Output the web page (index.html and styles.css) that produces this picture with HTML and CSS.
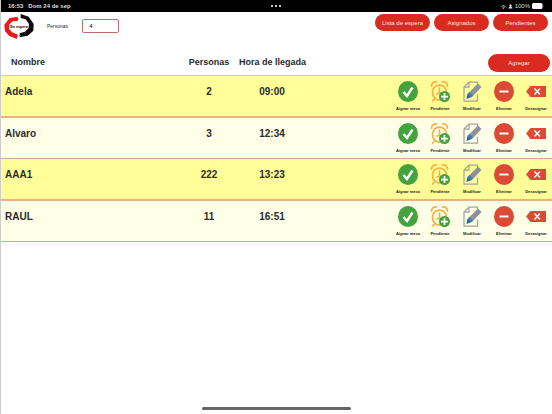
FILE: index.html
```html
<!DOCTYPE html>
<html lang="es">
<head>
    <meta charset="UTF-8">
    <meta name="viewport" content="width=device-width, initial-scale=1">
    <title>Lista de espera</title>
    <link rel="stylesheet" href="styles.css">
</head>
<body>
    <!-- iconos -->
    <svg class="sprite" aria-hidden="true">
        <symbol id="i-asignar" viewBox="0 0 40 42">
            <ellipse cx="20" cy="21" rx="20" ry="21" fill="#43a33c"/>
            <path d="M11 22l7 8 11-17" fill="none" stroke="#fff" stroke-width="5"/>
        </symbol>
        <symbol id="i-pendiente" viewBox="0 0 40 42">
            <g fill="none" stroke="#f2b445" stroke-width="3.5" stroke-linecap="round">
                <ellipse cx="19" cy="23" rx="14" ry="15"/>
                <path d="M3 10c0-6 5-9 10-8M25 2c6-1 10 3 10 8M19 14v10l-5 2M9 36l-4 4"/>
            </g>
            <circle cx="29" cy="31" r="11" fill="#43a33c"/>
            <path d="M29 24v14M22 31h14" stroke="#fff" stroke-width="3.5"/>
        </symbol>
        <symbol id="i-modificar" viewBox="0 0 40 42">
            <path d="M31 27v13H4V12L14 2h17v7M14 2v10H4" fill="none" stroke="#a2a4a6" stroke-width="2.5"/>
            <path d="M9 36l2-11 8 7z" fill="#27668f"/>
            <path d="M13 24L32 5l7 7-19 20z" fill="#8d929b"/>
            <path d="M11 26l4-4 7 7-4 4z" fill="#3b7fb0"/>
        </symbol>
        <symbol id="i-eliminar" viewBox="0 0 40 42">
            <ellipse cx="20" cy="21" rx="20" ry="21" fill="#dc4a35"/>
            <path d="M11 21h18" stroke="#fff" stroke-width="4"/>
        </symbol>
        <symbol id="i-desasignar" viewBox="0 0 40 42">
            <path d="M0 21l9-11h31v22H9z" fill="#dc4a35"/>
            <path d="M17 15l11 12M28 15L17 27" stroke="#fff" stroke-width="3"/>
        </symbol>
    </svg>

    <div class="status">
        <div class="status-left"><span>16:53</span><span>Dom 24 de sep</span></div>
        <svg class="dots" viewBox="0 0 10 2" aria-hidden="true"><path d="M0 0h2v2H0zM4 0h2v2H4zM8 0h2v2H8z" fill="#ccc"/></svg>
        <div class="status-right">
            <svg class="wifi" viewBox="0 0 10 10" aria-hidden="true"><path d="M1 5q4-4 8 0M3 7q2-2 4 0" fill="none" stroke="#ddd" stroke-width="1.6"/><circle cx="5" cy="8.6" r="1.1" fill="#ddd"/></svg>
            <svg class="wifi" viewBox="0 0 10 10" aria-hidden="true"><path d="M1 9c0-3 2-3 3-4a2.300 2.300 0 1 1 2 0c1 1 3 1 3 4z" fill="#ddd"/></svg>
            <span>100%</span>
            <svg class="battery" viewBox="0 0 24 12" aria-hidden="true"><rect width="21" height="12" rx="3" fill="#fff"/><path d="M22 4q2 2 0 4z" fill="#999"/></svg>
        </div>
    </div>

    <header class="toolbar">
        <svg class="logo" viewBox="0 0 90 75" role="img">
            <path d="M42 8L17 12 1 32l2 20 13 14 22 9 4-13-18-7-9-11 1-13 10-9 16-1z" fill="#ee1717"/>
            <path d="M50 0l24 8 15 22-1 20-17 15-25 5 1-12 16-5 11-11 1-12-10-14-15-4z" fill="#0b0b0b"/>
            <path d="M40 9l6 6-5 6M44 60l5 5-5 5" fill="none" stroke="#ddd" stroke-width="2"/>
            <text x="45" y="42" class="logo-text">En espera</text>
        </svg>
        <label class="personas-label" for="personas">Personas</label>
        <input class="personas-input" id="personas" type="text" value="4">
        <nav class="tabs">
            <button class="btn" type="button">Lista de espera</button>
            <button class="btn" type="button">Asignados</button>
            <button class="btn" type="button">Pendientes</button>
        </nav>
    </header>

    <main>
        <table class="lista">
            <colgroup>
                <col><col class="col-personas"><col class="col-hora"><col class="col-acciones">
            </colgroup>
            <thead>
                <tr>
                    <th class="nombre">Nombre</th>
                    <th>Personas</th>
                    <th>Hora de llegada</th>
                    <td class="agregar"><button class="btn btn-agregar" type="button">Agregar</button></td>
                </tr>
            </thead>
            <tbody>
                <tr>
                    <td class="nombre">Adela</td>
                    <td>2</td>
                    <td>09:00</td>
                    <td>
                        <div class="acciones">
                            <button type="button"><svg><use href="#i-asignar"/></svg>Aignar mesa</button>
                            <button type="button"><svg><use href="#i-pendiente"/></svg>Pendiente</button>
                            <button type="button"><svg><use href="#i-modificar"/></svg>Modificar</button>
                            <button type="button"><svg><use href="#i-eliminar"/></svg>Eliminar</button>
                            <button type="button"><svg><use href="#i-desasignar"/></svg>Desasignar</button>
                        </div>
                    </td>
                </tr>
                <tr>
                    <td class="nombre">Alvaro</td>
                    <td>3</td>
                    <td>12:34</td>
                    <td>
                        <div class="acciones">
                            <button type="button"><svg><use href="#i-asignar"/></svg>Aignar mesa</button>
                            <button type="button"><svg><use href="#i-pendiente"/></svg>Pendiente</button>
                            <button type="button"><svg><use href="#i-modificar"/></svg>Modificar</button>
                            <button type="button"><svg><use href="#i-eliminar"/></svg>Eliminar</button>
                            <button type="button"><svg><use href="#i-desasignar"/></svg>Desasignar</button>
                        </div>
                    </td>
                </tr>
                <tr>
                    <td class="nombre">AAA1</td>
                    <td>222</td>
                    <td>13:23</td>
                    <td>
                        <div class="acciones">
                            <button type="button"><svg><use href="#i-asignar"/></svg>Aignar mesa</button>
                            <button type="button"><svg><use href="#i-pendiente"/></svg>Pendiente</button>
                            <button type="button"><svg><use href="#i-modificar"/></svg>Modificar</button>
                            <button type="button"><svg><use href="#i-eliminar"/></svg>Eliminar</button>
                            <button type="button"><svg><use href="#i-desasignar"/></svg>Desasignar</button>
                        </div>
                    </td>
                </tr>
                <tr>
                    <td class="nombre">RAUL</td>
                    <td>11</td>
                    <td>16:51</td>
                    <td>
                        <div class="acciones">
                            <button type="button"><svg><use href="#i-asignar"/></svg>Aignar mesa</button>
                            <button type="button"><svg><use href="#i-pendiente"/></svg>Pendiente</button>
                            <button type="button"><svg><use href="#i-modificar"/></svg>Modificar</button>
                            <button type="button"><svg><use href="#i-eliminar"/></svg>Eliminar</button>
                            <button type="button"><svg><use href="#i-desasignar"/></svg>Desasignar</button>
                        </div>
                    </td>
                </tr>
            </tbody>
        </table>
    </main>
    <div class="home-bar"></div>
</body>
</html>
```
FILE: styles.css
```css
*{
    box-sizing: border-box;
    margin: 0;
    padding: 0;
}
body{
    display: flex;
    flex-direction: column;
    min-height: 100vh;
    border-left: 1px solid #ccc;
    background-color: #fff;
    color: #2b2b2b;
    font-family: "Liberation Sans", Arial, sans-serif;
}
button,input{
    font-family: inherit;
}
.sprite{
    position: absolute;
    width: 0;
    height: 0;
}

/* barra de estado */
.status{
    display: grid;
    grid-template-columns: 1fr auto 1fr;
    align-items: center;
    height: 12px;
    margin-left: -1px;
    padding: 0 8px;
    background-color: #000;
    color: #ddd;
    font-size: 6px;
    font-weight: bold;
}
.status-left{
    display: flex;
    gap: 5px;
}
.status-right{
    display: flex;
    justify-content: flex-end;
    align-items: center;
    gap: 2px;
    font-weight: normal;
}
.dots{
    width: 10px;
    height: 2px;
}
.wifi{
    width: 5px;
    height: 5px;
}
.battery{
    width: 12px;
    height: 6px;
}

/* cabecera */
.toolbar{
    display: flex;
    align-items: flex-start;
    padding: 2px 4px 0 3px;
}
.logo{
    width: 30px;
    height: 25px;
}
.logo-text{
    font-size: 11px;
    font-weight: bold;
    text-anchor: middle;
}
.personas-label{
    margin: 9px 14px 0 13px;
    font-size: 5px;
    line-height: 6px;
}
.personas-input{
    width: 37px;
    height: 14px;
    margin-top: 5px;
    padding-left: 6px;
    border: 1px solid #bf6b70;
    border-radius: 2px;
    background-color: #fff;
    font-size: 6px;
}
.tabs{
    display: flex;
    gap: 4px;
    margin-left: auto;
}
.btn{
    width: 55px;
    height: 17px;
    border: none;
    border-radius: 9px;
    background-color: #d92b20;
    color: #fbe3e0;
    font-size: 6px;
    cursor: pointer;
}
.btn:hover{
    background-color: #b81f15;
}

/* lista */
.lista{
    width: 100%;
    margin-top: 13px;
    border-collapse: collapse;
    table-layout: fixed;
}
.col-personas{
    width: 60px;
}
.col-hora{
    width: 66px;
}
.col-acciones{
    width: 247px;
}
.lista th{
    padding-top: 4px;
    font-size: 9px;
    line-height: 12px;
    white-space: nowrap;
    vertical-align: top;
}
.lista th.nombre{
    padding-left: 10px;
    text-align: left;
}
.lista .agregar{
    height: 23px;
    padding: 2px 2px 0 0;
    text-align: right;
    vertical-align: top;
}
.btn-agregar{
    display: block;
    width: 62px;
    height: 18px;
    margin-left: auto;
}
.lista tbody tr{
    border-bottom: 1px solid #d3a59c;
    background-color: #fffee6;
}
.lista tbody tr:nth-child(odd){
    border-bottom: 2px solid #eab183;
    background-color: #fffe98;
}
.lista tbody tr:first-child{
    border-top: 1px solid #d0cbb5;
}
.lista tbody td{
    height: 41px;
    padding-top: 10px;
    font-size: 10px;
    font-weight: bold;
    line-height: 12px;
    text-align: center;
    vertical-align: top;
}
.lista tbody tr:nth-child(odd) td{
    height: 42px;
}
.lista tbody td.nombre{
    padding-left: 4px;
    text-align: left;
}
.lista tbody td:last-child{
    padding-top: 5px;
}
.acciones{
    display: flex;
    justify-content: flex-end;
}
.acciones button{
    display: flex;
    flex-direction: column;
    align-items: center;
    gap: 4px;
    width: 32px;
    border: none;
    background: none;
    color: #222;
    font-size: 4px;
    font-weight: bold;
    line-height: 6px;
    white-space: nowrap;
    cursor: pointer;
}
.acciones svg{
    width: 20px;
    height: 21px;
}

.home-bar{
    width: 27%;
    height: 3px;
    margin: auto auto 4px;
    border-radius: 2px;
    background-color: #666;
}
```
